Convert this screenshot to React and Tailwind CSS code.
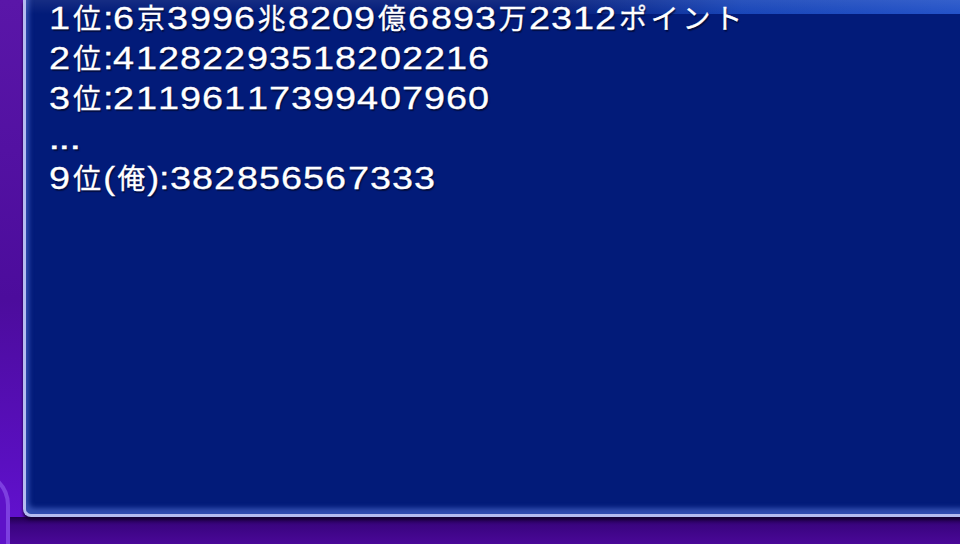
import React from "react";

const LINES = [
  "1位:6京3996兆8209億6893万2312ポイント",
  "2位:41282293518202216",
  "3位:21196117399407960",
  "...",
  "9位(俺):382856567333",
];

const isCJK = (ch) => /[\u3000-\u9fff\uff00-\uffef]/.test(ch);

function Ch({ ch }) {
  if (isCJK(ch)) {
    return (
      <span className="inline-block w-[31.75px] text-center text-[28px] leading-[30px] font-['Noto_Sans_CJK_JP','Noto_Sans_CJK_SC',sans-serif]">
        {ch}
      </span>
    );
  }
  if (/[0-9]/.test(ch)) {
    return (
      <span className="inline-block w-[22.2px] text-center">
        <span className="inline-block scale-x-[1.22]">{ch}</span>
      </span>
    );
  }
  if (ch === ":") {
    return (
      <span className="inline-block w-[10px] text-center">
        <span className="inline-block scale-x-[1.22]">{ch}</span>
      </span>
    );
  }
  if (ch === "(" || ch === ")") {
    return (
      <span className="inline-block w-[12.45px] text-center">
        <span className="inline-block scale-x-[1.15]">{ch}</span>
      </span>
    );
  }
  if (ch === ".") {
    return (
      <span className="inline-block w-[10.5px] text-center">
        <span className="inline-block scale-x-[1.4]">{ch}</span>
      </span>
    );
  }
  return <span className="inline-block">{ch}</span>;
}

function Line({ text }) {
  return (
    <div className="h-[40px] leading-[40px] whitespace-nowrap">
      {Array.from(text).map((ch, i) => (
        <Ch key={i} ch={ch} />
      ))}
    </div>
  );
}

export default function App() {
  return (
    <div className="relative w-[960px] h-[544px] overflow-hidden bg-[linear-gradient(to_bottom,#5a16a8_0%,#4c0c9c_55%,#5a0fc0_85%,#6512d4_100%)]">
      {/* bottom band below panel */}
      <div className="absolute left-0 right-0 top-[517px] bottom-0 bg-[linear-gradient(to_bottom,#220050_0%,#3a0480_30%,#4a0898_100%)]" />
      {/* ring decoration at bottom-left */}
      <div className="absolute left-[-60px] top-[470px] w-[70px] h-[110px] rounded-full border-[4px] border-[#8a52ea]/70 bg-[#5e12c8]" />

      <div className="relative pl-[23px] h-[517px] flex">
        <div className="relative flex-1 mr-[-20px] rounded-bl-[8px] border-l-[3px] border-b-[3px] border-[#b4bcf0] bg-[#021b79] shadow-[inset_3px_-6px_5px_rgba(90,120,220,0.55),0_3px_3px_rgba(20,0,50,0.9)]">
          {/* top highlight band */}
          <div className="absolute left-0 right-0 top-0 h-[14px] bg-[linear-gradient(to_right,rgba(20,60,180,0)_0%,rgba(20,60,180,0)_55%,rgba(30,80,200,0.8)_75%,rgba(40,90,210,0.9)_100%)]">
            <div className="h-full bg-[linear-gradient(to_bottom,rgba(255,255,255,0.08),rgba(0,0,0,0))]" />
          </div>
          <div className="relative pl-[23px] mt-[-1px] text-white text-[31px] font-['Liberation_Sans','Noto_Sans_CJK_JP',sans-serif] [-webkit-text-stroke:0.3px_white] [text-shadow:1px_2px_1px_rgba(0,0,20,0.55)]">
            {LINES.map((t, i) => (
              <Line key={i} text={t} />
            ))}
          </div>
        </div>
      </div>
    </div>
  );
}
